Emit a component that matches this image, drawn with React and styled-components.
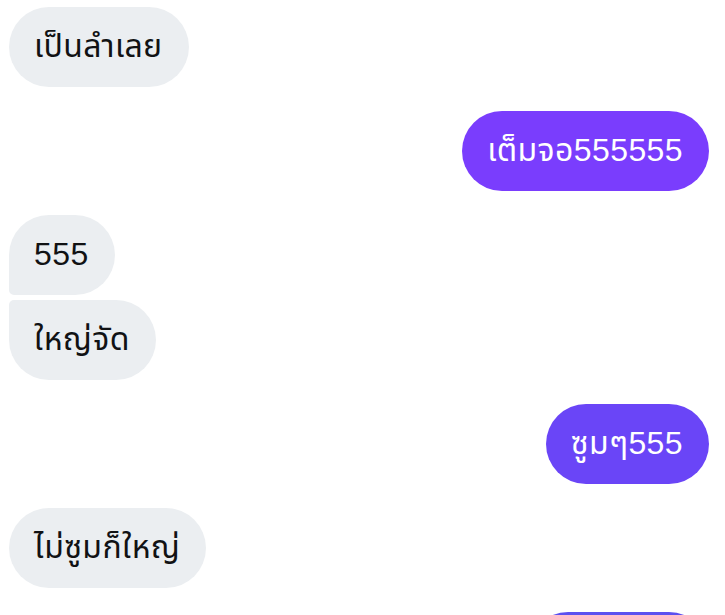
import React from 'react';
import styled, { createGlobalStyle } from 'styled-components';

const GlobalStyle = createGlobalStyle`
  html, body {
    margin: 0;
    padding: 0;
    background: #fff;
    overflow: hidden;
  }
  body {
    font-family: "Liberation Sans", "Noto Sans Thai", "Noto Sans", sans-serif;
  }
`;

const Thread = styled.div`
  display: flex;
  flex-direction: column;
  padding: 7px 16px 0 9px;
  height: 615px;
  box-sizing: border-box;
  overflow: hidden;
`;

const Group = styled.div`
  display: flex;
  flex-direction: column;
  align-items: ${({ $mine }) => ($mine ? 'flex-end' : 'flex-start')};
  gap: 5px;
  margin-bottom: 24px;
`;

const Bubble = styled.div`
  box-sizing: border-box;
  height: 80px;
  display: flex;
  align-items: center;
  padding: 0 26px 2px 25px;
  font-size: 32px;
  line-height: 1;
  letter-spacing: 0.4px;
  white-space: nowrap;
  color: ${({ $mine }) => ($mine ? '#ffffff' : '#111214')};
  background: ${({ $mine, $tone }) => ($mine ? $tone : '#ebeef1')};
  border-radius: 40px;
  ${({ $pos }) => $pos === 'first' && 'border-bottom-left-radius: 5px;'}
  ${({ $pos }) => $pos === 'last' && 'border-top-left-radius: 5px;'}
`;

const messages = [
  { mine: false, texts: ['เป็นลำเลย'] },
  { mine: true, tone: '#7a3dfd', texts: ['เต็มจอ555555'] },
  { mine: false, texts: ['555', 'ใหญ่จัด'] },
  { mine: true, tone: '#6a45f7', texts: ['ซูมๆ555'] },
  { mine: false, texts: ['ไม่ซูมก็ใหญ่'] },
  { mine: true, tone: '#5c50f0', texts: ['ซูมๆ5555'] },
];

const App = () => {
  return (
    <>
      <GlobalStyle />
      <Thread>
        {messages.map((m, i) => (
          <Group key={i} $mine={m.mine}>
            {m.texts.map((t, j) => {
              let pos = 'single';
              if (m.texts.length > 1) pos = j === 0 ? 'first' : j === m.texts.length - 1 ? 'last' : 'mid';
              return (
                <Bubble key={j} $mine={m.mine} $tone={m.tone} $pos={pos}>
                  {t}
                </Bubble>
              );
            })}
          </Group>
        ))}
      </Thread>
    </>
  );
};

export default App;
